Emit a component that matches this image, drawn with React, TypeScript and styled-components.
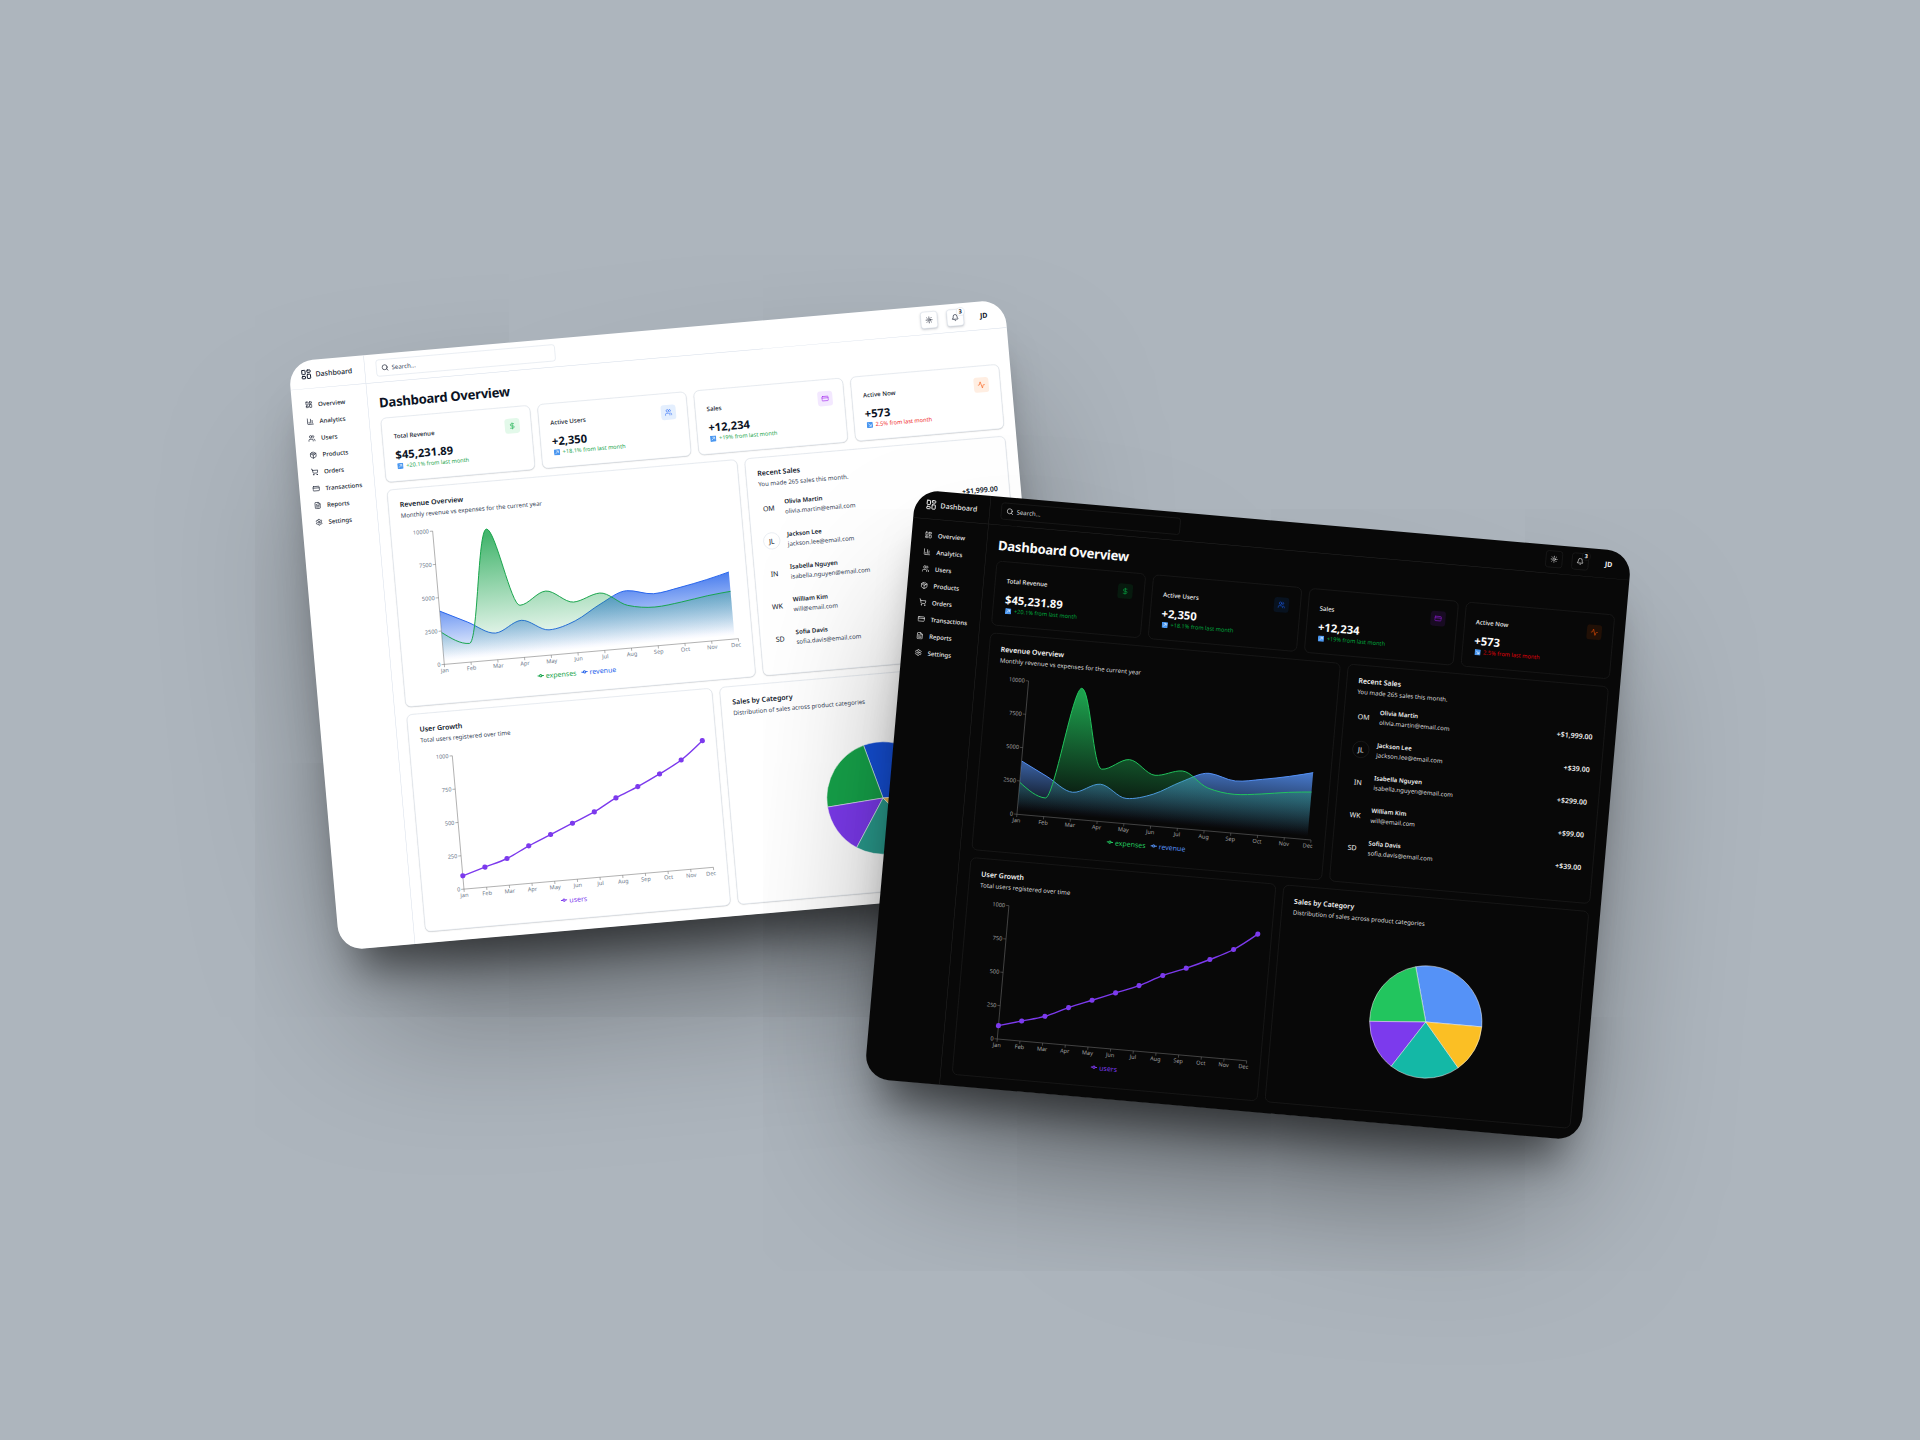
import React, { useId } from "react";
import styled, { createGlobalStyle, ThemeProvider, css } from "styled-components";
import {
  LayoutDashboard,
  ChartColumn,
  Users,
  Package,
  ShoppingCart,
  CreditCard,
  FileText,
  Settings,
  Search,
  Sun,
  Bell,
  DollarSign,
  Activity,
} from "lucide-react";

type Tone = "green" | "blue" | "purple" | "orange";

interface Palette {
  bg: string;
  text: string;
  strong: string;
  muted: string;
  border: string;
  cardShadow: string;
  buttonShadow: string;
  axis: string;
  axisText: string;
  up: string;
  down: string;
  revenue: string;
  expenses: string;
  users: string;
  pie: string[];
  tones: Record<Tone, { bg: string; fg: string }>;
}

const light: Palette = {
  bg: "#ffffff",
  text: "#0f172a",
  strong: "#0b1324",
  muted: "#334155",
  border: "#d3dbe7",
  cardShadow: "0 1px 3px rgba(0,0,0,0.1), 0 1px 2px rgba(0,0,0,0.1)",
  buttonShadow: "0 2px 5px rgba(15,23,42,0.25)",
  axis: "#606060",
  axisText: "#6b788a",
  up: "#16a34a",
  down: "#ef1c24",
  revenue: "#2563eb",
  expenses: "#16a34a",
  users: "#7c3aed",
  pie: ["#1550d8", "#16a34a", "#7c3aed", "#2a9d8f", "#e9b44c"],
  tones: {
    green: { bg: "#e3f9ea", fg: "#22b357" },
    blue: { bg: "#e4effe", fg: "#3b76f6" },
    purple: { bg: "#f3e8ff", fg: "#a62bf0" },
    orange: { bg: "#ffeee2", fg: "#f9621c" },
  },
};

const dark: Palette = {
  bg: "#080808",
  text: "#f1f1f1",
  strong: "#fafafa",
  muted: "#dcdcdc",
  border: "#272727",
  cardShadow: "none",
  buttonShadow: "none",
  axis: "#808080",
  axisText: "#a3a3a3",
  up: "#00a83e",
  down: "#e00008",
  revenue: "#5592f7",
  expenses: "#22c55e",
  users: "#7c3aed",
  pie: ["#5592f7", "#22c55e", "#7c3aed", "#14b8a6", "#fbbf24"],
  tones: {
    green: { bg: "#071a0e", fg: "#07a341" },
    blue: { bg: "#08121f", fg: "#1a56db" },
    purple: { bg: "#180b22", fg: "#8c1bd0" },
    orange: { bg: "#211006", fg: "#e24a05" },
  },
};

const GlobalStyle = createGlobalStyle`
  * { box-sizing: border-box; }
  body {
    margin: 0;
    background: #adb5bd;
    font-family: "Noto Sans", "Open Sans", sans-serif;
  }
  button, input { font-family: inherit; }
`;

const Stage = styled.div`
  position: relative;
  min-height: 100vh;
  overflow: hidden;
  background: #adb5bd;
`;

const Window = styled.div<{ $dx: number; $dy: number; $angle: number }>`
  position: absolute;
  left: 50%;
  top: 50%;
  width: 1536px;
  display: flex;
  overflow: hidden;
  border-radius: 52px;
  color: ${(p) => p.theme.text};
  background: ${(p) => p.theme.bg};
  box-shadow: 0 180px 340px -80px rgba(0, 0, 0, 0.58), 0 86px 90px -42px rgba(0, 0, 0, 0.5);
  transform: translate(-50%, -50%)
    translate(${(p) => p.$dx}px, ${(p) => p.$dy}px)
    rotate(${(p) => p.$angle}deg) scale(0.468);
`;

const Sidebar = styled.aside`
  flex: none;
  width: 162px;
  border-right: 1px solid ${(p) => p.theme.border};
`;

const Brand = styled.div`
  display: flex;
  align-items: center;
  gap: 8px;
  height: 61px;
  padding-left: 24px;
  border-bottom: 1px solid ${(p) => p.theme.border};
  font-size: 15px;
  font-weight: 500;
`;

const Nav = styled.nav`
  display: flex;
  flex-direction: column;
  padding: 16px 0 16px 16px;
`;

const NavLink = styled.a`
  display: flex;
  align-items: center;
  gap: 12px;
  height: 36px;
  padding-left: 12px;
  color: inherit;
  font-size: 13px;
  font-weight: 500;
  text-decoration: none;
`;

const Content = styled.div`
  flex: 1;
  min-width: 0;
`;

const TopBar = styled.header`
  display: flex;
  align-items: center;
  justify-content: space-between;
  height: 61px;
  padding: 0 24px;
  border-bottom: 1px solid ${(p) => p.theme.border};
`;

const SearchBox = styled.label`
  display: flex;
  align-items: center;
  gap: 6px;
  width: 384px;
  height: 36px;
  padding: 0 10px;
  border: 1px solid ${(p) => p.theme.border};
  border-radius: 6px;
`;

const SearchInput = styled.input`
  flex: 1;
  min-width: 0;
  padding: 0;
  border: 0;
  outline: 0;
  background: transparent;
  color: inherit;
  font-size: 13px;
  &::placeholder {
    color: ${(p) => p.theme.muted};
    opacity: 1;
  }
`;

const Actions = styled.div`
  display: flex;
  align-items: center;
  gap: 20px;
`;

const IconButton = styled.button`
  position: relative;
  display: grid;
  place-items: center;
  width: 36px;
  height: 36px;
  padding: 0;
  border: 1px solid ${(p) => p.theme.border};
  border-radius: 6px;
  color: inherit;
  background: ${(p) => p.theme.bg};
  box-shadow: ${(p) => p.theme.buttonShadow};
`;

const Badge = styled.span`
  position: absolute;
  top: -4px;
  right: -4px;
  width: 18px;
  height: 18px;
  border: 1px solid ${(p) => p.theme.border};
  border-radius: 9px;
  background: ${(p) => p.theme.bg};
  font-size: 12px;
  font-weight: 700;
  line-height: 16px;
  text-align: center;
`;

const ProfileButton = styled.button`
  width: 46px;
  height: 36px;
  padding: 0;
  border: 0;
  color: inherit;
  background: transparent;
  font-size: 15px;
  font-weight: 700;
`;

const Main = styled.main`
  display: grid;
  gap: 16px;
  padding: 24px;
`;

const PageTitle = styled.h1`
  margin: 0;
  color: ${(p) => p.theme.strong};
  font-size: 28px;
  line-height: 36px;
  font-weight: 700;
  letter-spacing: -0.02em;
`;

const StatGrid = styled.div`
  display: grid;
  grid-template-columns: repeat(4, minmax(0, 1fr));
  gap: 16px;
`;

const PanelGrid = styled.div<{ $columns: number }>`
  display: grid;
  grid-template-columns: repeat(${(p) => p.$columns}, minmax(0, 1fr));
  gap: 16px;
`;

const cardFrame = css`
  border: 1px solid ${(p) => p.theme.border};
  border-radius: 12px;
  background: ${(p) => p.theme.bg};
  box-shadow: ${(p) => p.theme.cardShadow};
  padding: 24px;
`;

const StatCard = styled.article`
  ${cardFrame}
`;

const StatHead = styled.div`
  display: flex;
  align-items: center;
  justify-content: space-between;
  margin-bottom: 8px;
`;

const StatTitle = styled.h2`
  margin: 0;
  font-size: 13px;
  line-height: 20px;
  font-weight: 500;
`;

const StatIcon = styled.span<{ $tone: Tone }>`
  display: grid;
  place-items: center;
  width: 32px;
  height: 32px;
  border-radius: 6px;
  color: ${(p) => p.theme.tones[p.$tone].fg};
  background: ${(p) => p.theme.tones[p.$tone].bg};
`;

const StatValue = styled.div`
  color: ${(p) => p.theme.strong};
  font-size: 24px;
  line-height: 32px;
  font-weight: 700;
`;

const StatChange = styled.div<{ $up: boolean }>`
  display: flex;
  align-items: center;
  gap: 6px;
  padding-left: 2px;
  color: ${(p) => (p.$up ? p.theme.up : p.theme.down)};
  font-size: 12px;
  line-height: 16px;
`;

const Panel = styled.section<{ $span: number }>`
  ${cardFrame}
  grid-column: span ${(p) => p.$span};
`;

const PanelTitle = styled.h2`
  margin: 0 0 6px;
  font-size: 15px;
  line-height: 16px;
  font-weight: 600;
`;

const PanelNote = styled.p`
  margin: 0 0 24px;
  color: ${(p) => p.theme.muted};
  font-size: 13px;
  line-height: 20px;
`;

const Chart = styled.svg`
  display: block;
  width: 100%;
  height: 350px;
  overflow: visible;
`;

const ChartBox = styled.div`
  height: 350px;
`;

const AxisText = styled.text`
  fill: ${(p) => p.theme.axisText};
  font-size: 12px;
`;

const Legend = styled.div`
  display: flex;
  justify-content: center;
  gap: 10px;
  height: 24px;
  margin-top: -29px;
  padding-right: 10px;
`;

const LegendItem = styled.span<{ $color: string }>`
  display: flex;
  align-items: center;
  gap: 4px;
  color: ${(p) => p.$color};
  font-size: 15px;
  line-height: 24px;
`;

const SaleList = styled.ul`
  display: grid;
  gap: 32px;
  margin: 0;
  padding: 0;
  list-style: none;
`;

const SaleRow = styled.li`
  display: flex;
  align-items: center;
  height: 38px;
`;

const Avatar = styled.span<{ $ring: boolean }>`
  display: grid;
  place-items: center;
  width: 36px;
  height: 36px;
  margin-right: 16px;
  border: 1px solid ${(p) => (p.$ring ? p.theme.border : "transparent")};
  border-radius: 50%;
  font-size: 15px;
`;

const SaleName = styled.div`
  margin-bottom: 4px;
  font-size: 13px;
  line-height: 14px;
  font-weight: 600;
`;

const SaleMail = styled.div`
  color: ${(p) => p.theme.muted};
  font-size: 13px;
  line-height: 20px;
`;

const SaleAmount = styled.div`
  margin-left: auto;
  font-size: 15px;
  line-height: 24px;
  font-weight: 600;
`;

const months = ["Jan", "Feb", "Mar", "Apr", "May", "Jun", "Jul", "Aug", "Sep", "Oct", "Nov", "Dec"];
const revenue = [4000, 3000, 2000, 2780, 1890, 2390, 3490, 4300, 3900, 4200, 4600, 5100];
const expenses = [2400, 1398, 9800, 3908, 4800, 3800, 4300, 3200, 2900, 3100, 3400, 3600];
const users = [100, 150, 200, 280, 350, 420, 490, 580, 650, 730, 820, 950];
const categories = [4000, 3000, 2000, 2780, 1890];

const navItems = [
  { label: "Overview", Icon: LayoutDashboard },
  { label: "Analytics", Icon: ChartColumn },
  { label: "Users", Icon: Users },
  { label: "Products", Icon: Package },
  { label: "Orders", Icon: ShoppingCart },
  { label: "Transactions", Icon: CreditCard },
  { label: "Reports", Icon: FileText },
  { label: "Settings", Icon: Settings },
];

const stats: { title: string; value: string; change: string; up: boolean; tone: Tone; Icon: typeof Users }[] = [
  { title: "Total Revenue", value: "$45,231.89", change: "+20.1% from last month", up: true, tone: "green", Icon: DollarSign },
  { title: "Active Users", value: "+2,350", change: "+18.1% from last month", up: true, tone: "blue", Icon: Users },
  { title: "Sales", value: "+12,234", change: "+19% from last month", up: true, tone: "purple", Icon: CreditCard },
  { title: "Active Now", value: "+573", change: "2.5% from last month", up: false, tone: "orange", Icon: Activity },
];

const sales = [
  { initials: "OM", name: "Olivia Martin", mail: "olivia.martin@email.com", amount: "+$1,999.00" },
  { initials: "JL", name: "Jackson Lee", mail: "jackson.lee@email.com", amount: "+$39.00" },
  { initials: "IN", name: "Isabella Nguyen", mail: "isabella.nguyen@email.com", amount: "+$299.00" },
  { initials: "WK", name: "William Kim", mail: "will@email.com", amount: "+$99.00" },
  { initials: "SD", name: "Sofia Davis", mail: "sofia.davis@email.com", amount: "+$39.00" },
];

type Point = [number, number];

const PLOT = { left: 65, top: 5, height: 286 };

function toPoints(values: number[], max: number, width: number): Point[] {
  const step = (width - PLOT.left - 5) / (values.length - 1);
  return values.map((v, i) => [PLOT.left + i * step, PLOT.top + PLOT.height * (1 - v / max)]);
}

/* Monotone cubic interpolation (Fritsch–Carlson), evenly spaced x. */
function monotone(points: Point[]): string {
  const n = points.length;
  const slopes = points.slice(1).map((p, i) => (p[1] - points[i][1]) / (p[0] - points[i][0]));
  const inner = slopes.slice(1).map((s1, i) => {
    const s0 = slopes[i];
    const mean = (s0 + s1) / 2;
    return (
      (Math.sign(s0) + Math.sign(s1)) * Math.min(Math.abs(s0), Math.abs(s1), 0.5 * Math.abs(mean)) || 0
    );
  });
  const first = (3 * slopes[0] - inner[0]) / 2;
  const last = (3 * slopes[n - 2] - inner[inner.length - 1]) / 2;
  const tangents = [first, ...inner, last];
  let d = `M${points[0][0]},${points[0][1]}`;
  for (let i = 1; i < n; i++) {
    const [x0, y0] = points[i - 1];
    const [x1, y1] = points[i];
    const h = (x1 - x0) / 3;
    d += `C${x0 + h},${y0 + h * tangents[i - 1]} ${x1 - h},${y1 - h * tangents[i]} ${x1},${y1}`;
  }
  return d;
}

function Axes({ width, max, palette }: { width: number; max: number; palette: Palette }) {
  const right = width - 5;
  const bottom = PLOT.top + PLOT.height;
  const step = (right - PLOT.left) / (months.length - 1);
  const ticks = [0, 1, 2, 3, 4];
  return (
    <g>
      <path
        d={`M${PLOT.left},${PLOT.top}V${bottom}H${right}`}
        fill="none"
        stroke={palette.axis}
      />
      {ticks.map((t) => {
        const y = bottom - (PLOT.height * t) / 4;
        return (
          <g key={t}>
            <path d={`M${PLOT.left - 6},${y}H${PLOT.left}`} stroke={palette.axis} />
            <AxisText x={PLOT.left - 8} y={y + 4} textAnchor="end">
              {(max * t) / 4}
            </AxisText>
          </g>
        );
      })}
      {months.map((m, i) => {
        const x = PLOT.left + step * i;
        const shift = i === months.length - 1 ? 6 : 0;
        return (
          <g key={m}>
            <path d={`M${x},${bottom}V${bottom + 6}`} stroke={palette.axis} />
            <AxisText x={x - shift} y={bottom + 17} textAnchor="middle">
              {m}
            </AxisText>
          </g>
        );
      })}
    </g>
  );
}

function LegendMark({ color }: { color: string }) {
  return (
    <svg width="14" height="14" viewBox="0 0 32 32" fill="none" stroke={color} strokeWidth="5" aria-hidden="true">
      <path d="M0,16h10.67A5.33,5.33,0,1,1,21.33,16H32M21.33,16A5.33,5.33,0,1,1,10.67,16" />
    </svg>
  );
}

function RevenueChart({ palette }: { palette: Palette }) {
  const id = useId().replace(/[^a-zA-Z0-9]/g, "");
  const width = 701;
  const bottom = PLOT.top + PLOT.height;
  const series = [
    { key: "revenue", color: palette.revenue, line: monotone(toPoints(revenue, 10000, width)) },
    { key: "expenses", color: palette.expenses, line: monotone(toPoints(expenses, 10000, width)) },
  ];
  return (
    <ChartBox>
      <Chart viewBox={`0 0 ${width} 350`} role="img" aria-label="Revenue and expenses by month">
        <defs>
          <clipPath id={`${id}clip`}>
            <rect x={PLOT.left} y="0" width="623" height="350" />
          </clipPath>
          {series.map((s) => (
            <linearGradient key={s.key} id={id + s.key} x1="0" y1="0" x2="0" y2="1">
              <stop offset="5%" stopColor={s.color} stopOpacity="0.8" />
              <stop offset="95%" stopColor={s.color} stopOpacity="0" />
            </linearGradient>
          ))}
        </defs>
        <Axes width={width} max={10000} palette={palette} />
        <g clipPath={`url(#${id}clip)`}>
          {series.map((s) => (
            <g key={s.key}>
              <path d={`${s.line}V${bottom}H${PLOT.left}Z`} fill={`url(#${id}${s.key})`} />
              <path d={s.line} fill="none" stroke={s.color} strokeWidth="2" />
            </g>
          ))}
        </g>
      </Chart>
      <Legend>
        <LegendItem $color={palette.expenses}>
          <LegendMark color={palette.expenses} />
          expenses
        </LegendItem>
        <LegendItem $color={palette.revenue}>
          <LegendMark color={palette.revenue} />
          revenue
        </LegendItem>
      </Legend>
    </ChartBox>
  );
}

function UsersChart({ palette }: { palette: Palette }) {
  const width = 605;
  const points = toPoints(users, 1000, width);
  return (
    <ChartBox>
      <Chart viewBox={`0 0 ${width} 350`} role="img" aria-label="Users by month">
        <Axes width={width} max={1000} palette={palette} />
        <path d={monotone(points)} fill="none" stroke={palette.users} strokeWidth="3" />
        {points.map(([x, y], i) => (
          <circle key={months[i]} cx={x} cy={y} r="5.5" fill={palette.users} />
        ))}
      </Chart>
      <Legend>
        <LegendItem $color={palette.users}>
          <LegendMark color={palette.users} />
          users
        </LegendItem>
      </Legend>
    </ChartBox>
  );
}

function CategoryChart({ palette }: { palette: Palette }) {
  const total = categories.reduce((a, b) => a + b, 0);
  const [cx, cy, r] = [303, 175, 120];
  let turn = 0;
  const at = (a: number) => `${cx + r * Math.cos(a)},${cy - r * Math.sin(a)}`;
  return (
    <Chart viewBox="0 0 605 350" role="img" aria-label="Sales share by category">
      {categories.map((value, i) => {
        const start = turn;
        turn += (value / total) * Math.PI * 2;
        return (
          <path
            key={palette.pie[i]}
            d={`M${cx},${cy}L${at(start)}A${r},${r} 0 0 0 ${at(turn)}Z`}
            fill={palette.pie[i]}
            stroke="#ffffff"
          />
        );
      })}
    </Chart>
  );
}

function TrendMark({ up }: { up: boolean }) {
  return (
    <svg width="13" height="13" viewBox="0 0 13 13" role="img" aria-label={up ? "Up" : "Down"}>
      <rect width="13" height="13" rx="1.5" fill="#4a97f0" />
      <path
        d={up ? "M3.5 9.5L9 4M5 3.5H9.5V8" : "M3.5 3.5L9 9M5 9.5H9.5V5"}
        fill="none"
        stroke="#ffffff"
        strokeWidth="1.2"
      />
    </svg>
  );
}

function Dashboard({ palette }: { palette: Palette }) {
  return (
    <>
      <Sidebar>
        <Brand>
          <LayoutDashboard size={24} strokeWidth={2} />
          Dashboard
        </Brand>
        <Nav>
          {navItems.map(({ label, Icon }) => (
            <NavLink href="#" key={label}>
              <Icon size={16} strokeWidth={2} />
              {label}
            </NavLink>
          ))}
        </Nav>
      </Sidebar>
      <Content>
        <TopBar>
          <SearchBox>
            <Search size={16} />
            <SearchInput type="search" placeholder="Search..." aria-label="Search" />
          </SearchBox>
          <Actions>
            <IconButton type="button" aria-label="Toggle theme">
              <Sun size={16} />
            </IconButton>
            <IconButton type="button" aria-label="Notifications">
              <Bell size={16} />
              <Badge>3</Badge>
            </IconButton>
            <ProfileButton type="button">JD</ProfileButton>
          </Actions>
        </TopBar>
        <Main>
          <PageTitle>Dashboard Overview</PageTitle>
          <StatGrid>
            {stats.map(({ title, value, change, up, tone, Icon }) => (
              <StatCard key={title}>
                <StatHead>
                  <StatTitle>{title}</StatTitle>
                  <StatIcon $tone={tone}>
                    <Icon size={16} />
                  </StatIcon>
                </StatHead>
                <StatValue>{value}</StatValue>
                <StatChange $up={up}>
                  <TrendMark up={up} />
                  {change}
                </StatChange>
              </StatCard>
            ))}
          </StatGrid>
          <PanelGrid $columns={7}>
            <Panel $span={4}>
              <PanelTitle>Revenue Overview</PanelTitle>
              <PanelNote>Monthly revenue vs expenses for the current year</PanelNote>
              <RevenueChart palette={palette} />
            </Panel>
            <Panel $span={3}>
              <PanelTitle>Recent Sales</PanelTitle>
              <PanelNote>You made 265 sales this month.</PanelNote>
              <SaleList>
                {sales.map((s) => (
                  <SaleRow key={s.name}>
                    <Avatar $ring={s.initials === "JL"}>{s.initials}</Avatar>
                    <div>
                      <SaleName>{s.name}</SaleName>
                      <SaleMail>{s.mail}</SaleMail>
                    </div>
                    <SaleAmount>{s.amount}</SaleAmount>
                  </SaleRow>
                ))}
              </SaleList>
            </Panel>
          </PanelGrid>
          <PanelGrid $columns={2}>
            <Panel $span={1}>
              <PanelTitle>User Growth</PanelTitle>
              <PanelNote>Total users registered over time</PanelNote>
              <UsersChart palette={palette} />
            </Panel>
            <Panel $span={1}>
              <PanelTitle>Sales by Category</PanelTitle>
              <PanelNote>Distribution of sales across product categories</PanelNote>
              <CategoryChart palette={palette} />
            </Panel>
          </PanelGrid>
        </Main>
      </Content>
    </>
  );
}

export default function App() {
  return (
    <Stage>
      <GlobalStyle />
      <ThemeProvider theme={light}>
        <Window $dx={-288} $dy={-95} $angle={-5}>
          <Dashboard palette={light} />
        </Window>
      </ThemeProvider>
      <ThemeProvider theme={dark}>
        <Window $dx={288} $dy={95} $angle={5}>
          <Dashboard palette={dark} />
        </Window>
      </ThemeProvider>
    </Stage>
  );
}
